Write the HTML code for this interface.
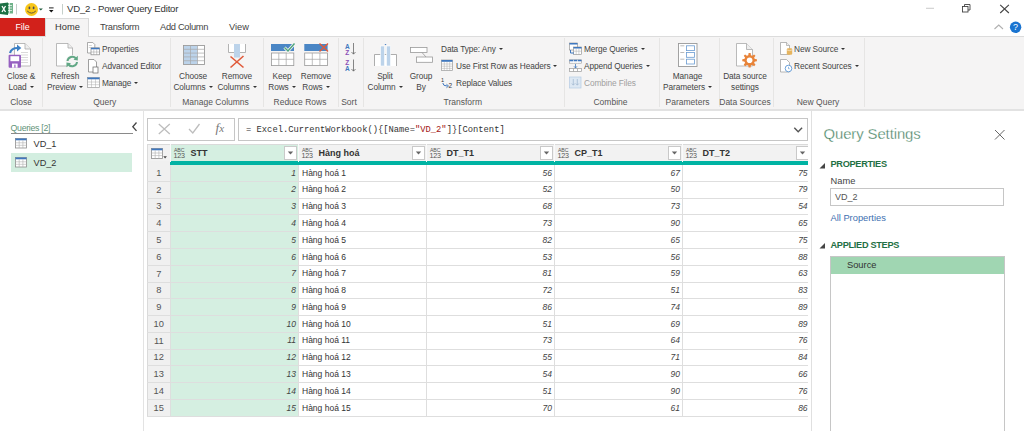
<!DOCTYPE html>
<html><head><meta charset="utf-8">
<style>
*{box-sizing:border-box;margin:0;padding:0}
html,body{width:1024px;height:431px;overflow:hidden;background:#fff;font-family:"Liberation Sans",sans-serif;color:#444}
.a{position:absolute;white-space:nowrap}
.t{position:absolute;white-space:nowrap;font-size:8.3px;line-height:10px;color:#444;letter-spacing:-0.1px}
.c{text-align:center}
.sep{position:absolute;top:38px;width:1px;height:69px;background:#e6e5e4}
.gl{position:absolute;top:97px;font-size:8.5px;line-height:10px;color:#555;white-space:nowrap;text-align:center}
.dd{display:inline-block;width:0;height:0;border-left:2.2px solid transparent;border-right:2.2px solid transparent;border-top:2.6px solid #333;vertical-align:middle;margin-left:3px;position:relative;top:-1px}
svg{position:absolute;overflow:visible}
</style></head><body>

<!-- TITLE BAR -->
<div class="a" style="left:0;top:0;width:1024px;height:18px;background:#fff"></div>
<svg style="left:0;top:0" width="64" height="18">
  <rect x="6" y="3" width="7" height="10.5" fill="#6fb28a"/>
  <path d="M7 5.5h5M7 8h5M7 10.5h5M9.5 3v10.5" stroke="#fff" stroke-width="0.7"/>
  <path d="M0 3.5 L8 2.5 L8 15 L0 14 Z" fill="#1d7044"/>
  <path d="M2 6 L5.5 12 M5.5 6 L2 12" stroke="#fff" stroke-width="1.3"/>
  <rect x="16" y="4" width="1" height="10.5" fill="#c5cfca"/>
  <circle cx="31.5" cy="9.5" r="6.5" fill="#f7c61a"/>
  <ellipse cx="29.4" cy="7.9" rx="0.9" ry="1.3" fill="#4a4a58"/>
  <ellipse cx="33.6" cy="7.9" rx="0.9" ry="1.3" fill="#4a4a58"/>
  <path d="M27.2 11 Q31.5 15.2 35.8 11" stroke="#5e5640" stroke-width="1" fill="none"/>
  <path d="M38.8 8.4 L42.8 8.4 L40.8 10.6 Z" fill="#1e5a3c"/>
  <rect x="49" y="7.4" width="4.6" height="1" fill="#222"/>
  <path d="M49 10 L53.5 10 L51.25 12.6 Z" fill="#111"/>
  <rect x="62" y="4" width="1" height="10.5" fill="#c5cfca"/>
</svg>
<div class="a" style="left:67px;top:3px;font-size:9.6px;line-height:12px;color:#333;letter-spacing:-0.2px">VD_2 - Power Query Editor</div>
<!-- window controls -->
<svg style="left:920px;top:0" width="104" height="40">
  <rect x="6" y="7.8" width="8" height="0.9" fill="#c4c4c4"/>
  <rect x="42.5" y="6.5" width="5.5" height="5.5" fill="none" stroke="#444" stroke-width="0.9"/>
  <path d="M44.5 6.5 V4.5 H50 V10 H48" fill="none" stroke="#444" stroke-width="0.9"/>
  <path d="M80.2 4.8 L88.9 13 M88.9 4.8 L80.2 13" stroke="#444" stroke-width="1.1"/>
  <path d="M74.5 29 L78.75 25 L83 29" fill="none" stroke="#b0b0b0" stroke-width="1.1"/>
  <circle cx="95.6" cy="27.2" r="5.7" fill="#1a74d0"/>
</svg>
<div class="a" style="left:1010.6px;top:21.3px;width:10px;font-size:9px;line-height:12px;font-weight:normal;color:#fff;text-align:center">?</div>

<!-- TABS -->
<div class="a" style="left:0;top:18px;width:45px;height:19px;background:#d2211b"></div>
<div class="a" style="left:0;top:21.8px;width:45px;text-align:center;font-size:8.8px;line-height:11px;color:#fff">File</div>
<div class="a" style="left:0;top:36px;width:1024px;height:1px;background:#dcdcdc"></div>
<div class="a" style="left:45px;top:18px;width:44px;height:19px;background:#f5f4f4;border:1px solid #dadada;border-bottom:none"></div>
<div class="a" style="left:55px;top:22px;font-size:9.3px;line-height:11px;color:#333">Home</div>
<div class="a" style="left:100px;top:22px;font-size:9.3px;line-height:11px;color:#444;letter-spacing:-0.3px">Transform</div>
<div class="a" style="left:160px;top:22px;font-size:9.3px;line-height:11px;color:#444;letter-spacing:-0.3px">Add Column</div>
<div class="a" style="left:229px;top:22px;font-size:9.3px;line-height:11px;color:#444">View</div>

<!-- RIBBON -->
<div class="a" style="left:0;top:37px;width:1024px;height:72px;background:#f5f4f4"></div>
<div class="a" style="left:0;top:109px;width:1024px;height:1.5px;background:#e2e2e2"></div>
<div class="sep" style="left:42px"></div>
<div class="sep" style="left:170px"></div>
<div class="sep" style="left:263px"></div>
<div class="sep" style="left:338px"></div>
<div class="sep" style="left:363px"></div>
<div class="sep" style="left:564px"></div>
<div class="sep" style="left:659px"></div>
<div class="sep" style="left:719px"></div>
<div class="sep" style="left:773px"></div>
<div class="sep" style="left:864px"></div>

<!-- Close & Load -->
<svg style="left:0;top:0" width="1024" height="110">
  <!-- close&load doc -->
  <path d="M14.5 43.5 H25 L30.5 49 V66 H14.5 Z" fill="#fff" stroke="#a9a9a9" stroke-width="0.8"/>
  <path d="M25 43.5 V49 H30.5" fill="#eee" stroke="#a9a9a9" stroke-width="0.8"/>
  <path d="M21 52.5h7M21 55h7M21 57.5h7M21 60h7M21 62.5h7" stroke="#c8c8c8" stroke-width="0.7"/>
  <path d="M10 53 Q11.5 47.8 18 48" fill="none" stroke="#3b7fc4" stroke-width="2.2"/>
  <path d="M17 44.6 L21.3 48 L17 51.4 Z" fill="#3b7fc4"/>
  <rect x="8.6" y="54.7" width="12.4" height="13" rx="1" fill="#9660c0"/>
  <rect x="10.4" y="56.2" width="8.8" height="5" fill="#fff"/>
  <rect x="12" y="63.6" width="5.6" height="4.1" fill="#fff"/>
  <rect x="14.3" y="64.6" width="1.2" height="3.1" fill="#9660c0"/>
  <!-- refresh doc -->
  <path d="M56.5 43.5 H68 L72.5 48 V66 H56.5 Z" fill="#fff" stroke="#a9a9a9" stroke-width="0.8"/>
  <path d="M68 43.5 V48 H72.5" fill="#eee" stroke="#a9a9a9" stroke-width="0.8"/>
  <circle cx="72.2" cy="61.6" r="6.6" fill="#f5f4f4"/>
  <path d="M67.5 61 A4.8 4.8 0 0 1 76 58.5" fill="none" stroke="#62a886" stroke-width="2"/>
  <path d="M77.8 55.8 L77.8 60.5 L73.5 59.8 Z" fill="#62a886"/>
  <path d="M77 62 A4.8 4.8 0 0 1 68.5 64.5" fill="none" stroke="#62a886" stroke-width="2"/>
  <path d="M66.5 67.2 L66.5 62.5 L71 63.2 Z" fill="#62a886"/>
  <!-- properties icon -->
  <path d="M87.5 42.5 H92.8 L94.8 44.5 V53 H87.5 Z" fill="#fff" stroke="#888" stroke-width="0.7"/>
  <path d="M88.8 45.5h3M88.8 47.5h2" stroke="#aaa" stroke-width="0.5"/>
  <rect x="91" y="47.8" width="8.5" height="7" fill="#fff" stroke="#888" stroke-width="0.7"/>
  <rect x="91" y="47.8" width="8.5" height="1.5" fill="#3f78bf"/>
  <path d="M93.8 49.3v5.5M96.7 49.3v5.5M91 52h8.5" stroke="#999" stroke-width="0.5"/>
  <!-- advanced editor icon -->
  <path d="M88.5 59.5 H94 L96.5 62 V72 H88.5 Z" fill="#fff" stroke="#777" stroke-width="0.7"/>
  <rect x="93" y="67" width="5" height="6" fill="#fff" stroke="#666" stroke-width="0.7"/>
  <!-- manage icon -->
  <rect x="87.5" y="77.5" width="12" height="10" fill="#fff" stroke="#999" stroke-width="0.7"/>
  <rect x="87.5" y="77.5" width="12" height="1.8" fill="#3f78bf"/>
  <path d="M91.5 79v8.5M95.5 79v8.5M87.5 82h12M87.5 84.7h12" stroke="#aaa" stroke-width="0.5"/>
  <!-- choose columns -->
  <rect x="183.5" y="45.5" width="21" height="19" fill="#fff" stroke="#9a9a9a" stroke-width="0.9"/>
  <rect x="184" y="46" width="13.5" height="18" fill="#bcd3ea"/>
  <path d="M190.5 45.5v19M197.5 45.5v19M183.5 49.3h21M183.5 53.1h21M183.5 56.9h21M183.5 60.7h21" stroke="#a8a8a8" stroke-width="0.7"/>
  <!-- remove columns -->
  <path d="M228.5 44 V52.5 H245.5 V44" fill="#fff" stroke="#aaa" stroke-width="0.9"/>
  <rect x="234" y="44" width="6" height="13.5" fill="#bcd3ea"/>
  <path d="M230.5 56.5 L243.5 67.5 M243.5 56 L230.5 67.5" stroke="#e05a3a" stroke-width="1.6"/>
  <!-- keep rows -->
  <rect x="271" y="44" width="23" height="7" fill="#4a86c5"/>
  <rect x="271.4" y="53" width="22.4" height="12.6" fill="#fff" stroke="#999" stroke-width="0.8"/>
  <path d="M278.8 53v12.6M286.2 53v12.6M271.4 59.3h22.4" stroke="#a3a3a3" stroke-width="0.7"/>
  <path d="M284.5 47.5 L288 51 L294.5 43.5" fill="none" stroke="#f5f4f4" stroke-width="3"/>
  <path d="M284.5 47.5 L288 51 L294.5 43.5" fill="none" stroke="#4ea57c" stroke-width="1.4"/>
  <!-- remove rows -->
  <rect x="304.3" y="44" width="23.3" height="7" fill="#4a86c5"/>
  <rect x="304.7" y="53" width="22.8" height="12.6" fill="#fff" stroke="#999" stroke-width="0.8"/>
  <path d="M312.3 53v12.6M319.9 53v12.6M304.7 59.3h22.8" stroke="#a3a3a3" stroke-width="0.7"/>
  <path d="M319.5 43.5 L328 51.5 M328 43.5 L319.5 51.5" stroke="#e05a3a" stroke-width="1.4"/>
  <!-- sort -->
  <text x="345" y="48.6" font-family="Liberation Sans" font-size="6.5" font-weight="bold" fill="#3f78bf">A</text>
  <text x="345.3" y="54.6" font-family="Liberation Sans" font-size="6.5" font-weight="bold" fill="#8a4fb7">Z</text>
  <path d="M353.5 43v11M351.5 52l2 2.2 2-2.2" fill="none" stroke="#555" stroke-width="0.7"/>
  <text x="345.3" y="65" font-family="Liberation Sans" font-size="6.5" font-weight="bold" fill="#8a4fb7">Z</text>
  <text x="345" y="71.3" font-family="Liberation Sans" font-size="6.5" font-weight="bold" fill="#3f78bf">A</text>
  <path d="M353.5 59.5v11.5M351.5 69l2 2.2 2-2.2" fill="none" stroke="#555" stroke-width="0.7"/>
  <!-- split column -->
  <path d="M374.5 66 V54.5 H396.5 V66" fill="#fff" stroke="#999" stroke-width="0.8"/>
  <rect x="380.5" y="46" width="4" height="20" fill="#bcd3ea" stroke="#fff" stroke-width="0.6"/>
  <rect x="386.5" y="46" width="4" height="20" fill="#bcd3ea" stroke="#fff" stroke-width="0.6"/>
  <path d="M384.5 44 L386.5 44 L385.5 45.3 Z" fill="#3f78bf"/>
  <!-- group by -->
  <rect x="410.5" y="47.5" width="16.5" height="5" fill="#fff" stroke="#999" stroke-width="0.8"/>
  <rect x="416.5" y="57" width="16" height="5.3" fill="#fff" stroke="#999" stroke-width="0.8"/>
  <path d="M422 52.5 L426 57" stroke="#999" stroke-width="0.8"/>
  <!-- use first row -->
  <rect x="441.5" y="60" width="11" height="10.5" fill="#fff" stroke="#999" stroke-width="0.7"/>
  <rect x="441.5" y="60" width="11" height="1.8" fill="#3f78bf"/>
  <path d="M444.3 61.8v8.7M447 61.8v8.7M449.7 61.8v8.7M441.5 64h11M441.5 66.2h11M441.5 68.4h11" stroke="#aaa" stroke-width="0.5"/>
  <!-- replace values -->
  <text x="441" y="82" font-family="Liberation Sans" font-size="5.5" fill="#333">1</text>
  <text x="448.5" y="88" font-family="Liberation Sans" font-size="6.5" fill="#333">2</text>
  <path d="M442.8 83 Q443 86 447 86" fill="none" stroke="#3f78bf" stroke-width="1"/>
  <path d="M446.5 84.3 L448.5 86 L446.5 87.7" fill="none" stroke="#3f78bf" stroke-width="1"/>
  <!-- merge -->
  <rect x="569.5" y="43" width="8" height="7" fill="#fff" stroke="#888" stroke-width="0.6"/>
  <rect x="569.5" y="43" width="8" height="1.5" fill="#3f78bf"/>
  <rect x="573.5" y="47" width="8" height="7.5" fill="#fff" stroke="#888" stroke-width="0.6"/>
  <rect x="573.5" y="47" width="8" height="1.5" fill="#3f78bf"/>
  <path d="M576.2 48.5v6M578.9 48.5v6M573.5 51.2h8" stroke="#aaa" stroke-width="0.5"/>
  <path d="M570.5 50 V53 H574" fill="none" stroke="#3f78bf" stroke-width="1"/>
  <!-- append -->
  <rect x="569.5" y="59.8" width="12" height="3.4" fill="#fff" stroke="#999" stroke-width="0.6"/>
  <rect x="569.5" y="59.8" width="12" height="1.5" fill="#3f78bf"/>
  <path d="M573.5 59.8v3.4M577.5 59.8v3.4" stroke="#fff" stroke-width="0.6"/>
  <path d="M575.5 64v4M574 66.3l1.5 1.7 1.5-1.7" fill="none" stroke="#3f78bf" stroke-width="0.8"/>
  <rect x="569.5" y="68.6" width="12" height="2.8" fill="#fff" stroke="#999" stroke-width="0.7"/>
  <path d="M573.5 68.6v2.8M577.5 68.6v2.8" stroke="#999" stroke-width="0.7"/>
  <!-- combine files -->
  <rect x="569.5" y="77" width="11.5" height="11" fill="#dde8f3" stroke="#b5cbe3" stroke-width="0.7"/>
  <path d="M573.3 79v6M571.8 83.5l1.5 1.7 1.5-1.7M577.3 79v6M575.8 83.5l1.5 1.7 1.5-1.7" fill="none" stroke="#9fb6cf" stroke-width="0.7"/>
  <!-- manage parameters -->
  <rect x="678.5" y="43.5" width="18.5" height="23" fill="#fff" stroke="#999" stroke-width="0.9"/>
  <rect x="686.5" y="45.8" width="8" height="4.8" fill="#fff" stroke="#6a9bd1" stroke-width="0.8"/>
  <rect x="686.5" y="52.5" width="8" height="4.8" fill="#fff" stroke="#6a9bd1" stroke-width="0.8"/>
  <rect x="686.5" y="59.2" width="8" height="4.8" fill="#fff" stroke="#6a9bd1" stroke-width="0.8"/>
  <path d="M680.3 45.8h4M680.3 52.5h4M680.3 59.2h4" stroke="#aaa" stroke-width="0.8"/>
  <!-- data source settings -->
  <path d="M736.5 43.5 H746.5 L752.5 49.5 V66 H736.5 Z" fill="#fff" stroke="#a9a9a9" stroke-width="0.8"/>
  <path d="M746.5 43.5 V49.5 H752.5" fill="#eee" stroke="#a9a9a9" stroke-width="0.8"/>
  <g transform="translate(749.6 60.3)" fill="#e8843a"><circle r="5.3"/><path d="M-1.5 -4 L-1 -7.3 H1 L1.5 -4 Z" transform="rotate(0)"/><path d="M-1.5 -4 L-1 -7.3 H1 L1.5 -4 Z" transform="rotate(45)"/><path d="M-1.5 -4 L-1 -7.3 H1 L1.5 -4 Z" transform="rotate(90)"/><path d="M-1.5 -4 L-1 -7.3 H1 L1.5 -4 Z" transform="rotate(135)"/><path d="M-1.5 -4 L-1 -7.3 H1 L1.5 -4 Z" transform="rotate(180)"/><path d="M-1.5 -4 L-1 -7.3 H1 L1.5 -4 Z" transform="rotate(225)"/><path d="M-1.5 -4 L-1 -7.3 H1 L1.5 -4 Z" transform="rotate(270)"/><path d="M-1.5 -4 L-1 -7.3 H1 L1.5 -4 Z" transform="rotate(315)"/><circle r="2.8" fill="#fff"/></g>
  <!-- new source -->
  <path d="M780.5 42.5 H786.5 L789.5 45.5 V54.5 H780.5 Z" fill="#fff" stroke="#999" stroke-width="0.7"/>
  <path d="M786.5 42.5 V45.5 H789.5" fill="#eee" stroke="#999" stroke-width="0.6"/><rect x="786.8" y="48.3" width="5.4" height="6.4" rx="1.2" fill="#e6b45e"/><path d="M787 50 Q789.5 51.2 792 50" fill="none" stroke="#fff" stroke-width="0.5"/>
  <!-- recent sources -->
  <path d="M780.5 59.5 H786.5 L789.5 62.5 V72 H780.5 Z" fill="#fff" stroke="#999" stroke-width="0.7"/>
  <circle cx="788.5" cy="68.5" r="3.3" fill="#fff" stroke="#4a8bd0" stroke-width="0.8"/>
  <path d="M788.5 66.8v1.9h1.2" fill="none" stroke="#4a8bd0" stroke-width="0.6"/>
</svg>

<div class="t c" style="left:0;top:71px;width:42px">Close &amp;</div>
<div class="t c" style="left:0;top:82px;width:42px">Load<span class="dd"></span></div>
<div class="gl" style="left:0;width:42px">Close</div>

<div class="t c" style="left:43px;top:71px;width:44px">Refresh</div>
<div class="t c" style="left:43px;top:82px;width:44px">Preview<span class="dd"></span></div>
<div class="t" style="left:102px;top:44px">Properties</div>
<div class="t" style="left:102px;top:61px">Advanced Editor</div>
<div class="t" style="left:102px;top:78px">Manage<span class="dd"></span></div>
<div class="gl" style="left:41.25px;width:127px">Query</div>

<div class="t c" style="left:171px;top:71px;width:44px">Choose</div>
<div class="t c" style="left:171px;top:82px;width:44px">Columns<span class="dd"></span></div>
<div class="t c" style="left:215px;top:71px;width:44px">Remove</div>
<div class="t c" style="left:215px;top:82px;width:44px">Columns<span class="dd"></span></div>
<div class="gl" style="left:169.5px;width:92px">Manage Columns</div>

<div class="t c" style="left:264px;top:71px;width:36px">Keep</div>
<div class="t c" style="left:264px;top:82px;width:36px">Rows<span class="dd"></span></div>
<div class="t c" style="left:298px;top:71px;width:36px">Remove</div>
<div class="t c" style="left:298px;top:82px;width:36px">Rows<span class="dd"></span></div>
<div class="gl" style="left:263px;width:74px">Reduce Rows</div>

<div class="gl" style="left:337px;width:24px">Sort</div>

<div class="t c" style="left:365px;top:71px;width:40px">Split</div>
<div class="t c" style="left:365px;top:82px;width:40px">Column<span class="dd"></span></div>
<div class="t c" style="left:404px;top:71px;width:34px">Group</div>
<div class="t c" style="left:404px;top:82px;width:34px">By</div>
<div class="t" style="left:441px;top:44px">Data Type: Any<span class="dd"></span></div>
<div class="t" style="left:456px;top:61px">Use First Row as Headers<span class="dd"></span></div>
<div class="t" style="left:456px;top:78px">Replace Values</div>
<div class="gl" style="left:362.8px;width:200px">Transform</div>

<div class="t" style="left:584px;top:44px">Merge Queries<span class="dd"></span></div>
<div class="t" style="left:584px;top:61px">Append Queries<span class="dd"></span></div>
<div class="t" style="left:584px;top:78px;color:#a0a0a0">Combine Files</div>
<div class="gl" style="left:563.5px;width:94px">Combine</div>

<div class="t c" style="left:658px;top:71px;width:59px">Manage</div>
<div class="t c" style="left:658px;top:82px;width:59px">Parameters<span class="dd"></span></div>
<div class="gl" style="left:658px;width:59px">Parameters</div>

<div class="t c" style="left:718.5px;top:71px;width:53px">Data source</div>
<div class="t c" style="left:718.5px;top:82px;width:53px">settings</div>
<div class="gl" style="left:718.5px;width:53px">Data Sources</div>

<div class="t" style="left:794px;top:44px">New Source<span class="dd"></span></div>
<div class="t" style="left:794px;top:61px">Recent Sources<span class="dd"></span></div>
<div class="gl" style="left:773px;width:90px">New Query</div>


<!-- LEFT PANE -->


<!-- FORMULA + TABLE -->
<div class="a" style="left:143px;top:110px;width:1px;height:321px;background:#e3e3e3"></div>
<div class="a" style="left:10.5px;top:122.5px;font-size:8.8px;line-height:11px;color:#5f9378;letter-spacing:-0.3px">Queries [2]</div>
<div class="a" style="left:10.5px;top:133px;width:122px;height:1px;background:#8a8a8a"></div>
<svg style="left:131px;top:121px" width="8" height="12"><path d="M5.5 1.5 L1.8 5.7 L5.5 9.9" fill="none" stroke="#444" stroke-width="1.3"/></svg>
<div class="a" style="left:10.5px;top:153px;width:121.5px;height:19px;background:#d3eee0"></div>
<svg style="left:15px;top:137.5px" width="12" height="11"><rect x="0.5" y="0.5" width="11" height="9.5" fill="#fff" stroke="#8c8c8c" stroke-width="0.8"/><rect x="0.5" y="0.5" width="11" height="1.8" fill="#3f78bf"/><path d="M4.2 2.3v7.7M7.9 2.3v7.7M0.5 4.8h11M0.5 7.3h11" stroke="#b0b0b0" stroke-width="0.6"/></svg>
<div class="a" style="left:33.5px;top:139.3px;font-size:9.2px;line-height:11px;color:#333">VD_1</div>
<svg style="left:15px;top:156.5px" width="12" height="11"><rect x="0.5" y="0.5" width="11" height="9.5" fill="#fff" stroke="#8c8c8c" stroke-width="0.8"/><rect x="0.5" y="0.5" width="11" height="1.8" fill="#3f78bf"/><path d="M4.2 2.3v7.7M7.9 2.3v7.7M0.5 4.8h11M0.5 7.3h11" stroke="#b0b0b0" stroke-width="0.6"/></svg>
<div class="a" style="left:33.5px;top:158.3px;font-size:9.2px;line-height:11px;color:#333">VD_2</div>
<div class="a" style="left:147px;top:118px;width:88px;height:23px;border:1px solid #c6c6c6;background:#fff"></div>
<svg style="left:147px;top:118px" width="88" height="23"><path d="M11.8 6 L22.8 16 M22.8 6 L11.8 16" stroke="#bdbdbd" stroke-width="1.3"/><path d="M42 11 L45.8 15 L52.5 6" fill="none" stroke="#bdbdbd" stroke-width="1.3"/></svg>
<div class="a" style="left:215.5px;top:121px;font-family:'Liberation Serif',serif;font-style:italic;font-size:13px;line-height:14px;color:#777">f<span style="font-size:11px">x</span></div>
<div class="a" style="left:238px;top:118px;width:570px;height:23px;border:1px solid #c6c6c6;background:#fff"></div>
<div class="a" style="left:246px;top:124.5px;font-family:'Liberation Mono',monospace;font-size:8.8px;line-height:11px;color:#333">= Excel.CurrentWorkbook(){[Name=<span style="color:#a31515">"VD_2"</span>]}[Content]</div>
<svg style="left:790px;top:124px" width="16" height="12"><path d="M4.3 3.8 L8.2 7.8 L12.1 3.8" fill="none" stroke="#555" stroke-width="1.4"/></svg>
<div class="a" style="left:147px;top:144px;width:661px;height:18px;background:#f2f2f2"></div>
<div class="a" style="left:170px;top:144px;width:128.5px;height:18px;background:#d5efe1"></div>
<div class="a" style="left:147px;top:161px;width:23px;height:255px;background:#f0f0f0"></div>
<div class="a" style="left:170px;top:165px;width:128.5px;height:251px;background:#d5efe1"></div>
<div class="a" style="left:170px;top:161.4px;width:638px;height:3.4px;background:#00b3a3"></div>
<div class="a" style="left:147px;top:144px;width:661px;height:1px;background:#dadada"></div>
<div class="a" style="left:147px;top:144px;width:1px;height:273px;background:#dadada"></div>
<div class="a" style="left:147px;top:181px;width:661px;height:1px;background:#dedede"></div>
<div class="a" style="left:147px;top:198px;width:661px;height:1px;background:#dedede"></div>
<div class="a" style="left:147px;top:214px;width:661px;height:1px;background:#dedede"></div>
<div class="a" style="left:147px;top:231px;width:661px;height:1px;background:#dedede"></div>
<div class="a" style="left:147px;top:248px;width:661px;height:1px;background:#dedede"></div>
<div class="a" style="left:147px;top:265px;width:661px;height:1px;background:#dedede"></div>
<div class="a" style="left:147px;top:282px;width:661px;height:1px;background:#dedede"></div>
<div class="a" style="left:147px;top:298px;width:661px;height:1px;background:#dedede"></div>
<div class="a" style="left:147px;top:315px;width:661px;height:1px;background:#dedede"></div>
<div class="a" style="left:147px;top:332px;width:661px;height:1px;background:#dedede"></div>
<div class="a" style="left:147px;top:349px;width:661px;height:1px;background:#dedede"></div>
<div class="a" style="left:147px;top:365px;width:661px;height:1px;background:#dedede"></div>
<div class="a" style="left:147px;top:382px;width:661px;height:1px;background:#dedede"></div>
<div class="a" style="left:147px;top:399px;width:661px;height:1px;background:#dedede"></div>
<div class="a" style="left:147px;top:416px;width:661px;height:1px;background:#dedede"></div>
<div class="a" style="left:170px;top:165px;width:1px;height:251px;background:#dedede"></div>
<div class="a" style="left:170px;top:144px;width:1px;height:18px;background:#fafafa"></div>
<div class="a" style="left:298px;top:165px;width:1px;height:251px;background:#dedede"></div>
<div class="a" style="left:298px;top:144px;width:1px;height:18px;background:#fafafa"></div>
<div class="a" style="left:426px;top:165px;width:1px;height:251px;background:#dedede"></div>
<div class="a" style="left:426px;top:144px;width:1px;height:18px;background:#fafafa"></div>
<div class="a" style="left:554px;top:165px;width:1px;height:251px;background:#dedede"></div>
<div class="a" style="left:554px;top:144px;width:1px;height:18px;background:#fafafa"></div>
<div class="a" style="left:682px;top:165px;width:1px;height:251px;background:#dedede"></div>
<div class="a" style="left:682px;top:144px;width:1px;height:18px;background:#fafafa"></div>
<svg style="left:151px;top:148px" width="18" height="12"><rect x="0.5" y="0.5" width="11" height="10" fill="#fff" stroke="#8c8c8c" stroke-width="0.8"/><rect x="0.5" y="0.5" width="11" height="1.8" fill="#3f78bf"/><path d="M4.2 2.3v8M7.9 2.3v8M0.5 5h11M0.5 7.6h11" stroke="#b0b0b0" stroke-width="0.6"/><path d="M12.3 8.2 L15.9 8.2 L14.1 10.4 Z" fill="#444"/></svg>
<div class="a" style="left:174px;top:147.5px;font-size:5.2px;line-height:5px;color:#555;letter-spacing:-0.1px">ABC</div>
<div class="a" style="left:173.5px;top:152.5px;font-size:7.2px;line-height:6px;color:#555;letter-spacing:-0.3px">123</div>
<div class="a" style="left:190.5px;top:148px;font-size:9px;line-height:10px;font-weight:bold;color:#333">STT</div>
<div class="a" style="left:284px;top:146px;width:13px;height:13.5px;background:#fff;border:1px solid #c9c9c9;"></div>
<svg style="left:284px;top:146px" width="13" height="13"><path d="M3.8 5.6 L9.2 5.6 L6.5 8.4 Z" fill="#666"/></svg>
<div class="a" style="left:302px;top:147.5px;font-size:5.2px;line-height:5px;color:#555;letter-spacing:-0.1px">ABC</div>
<div class="a" style="left:301.5px;top:152.5px;font-size:7.2px;line-height:6px;color:#555;letter-spacing:-0.3px">123</div>
<div class="a" style="left:318.5px;top:148px;font-size:9px;line-height:10px;font-weight:bold;color:#333">Hàng hoá</div>
<div class="a" style="left:412px;top:146px;width:13px;height:13.5px;background:#fff;border:1px solid #c9c9c9;"></div>
<svg style="left:412px;top:146px" width="13" height="13"><path d="M3.8 5.6 L9.2 5.6 L6.5 8.4 Z" fill="#666"/></svg>
<div class="a" style="left:430px;top:147.5px;font-size:5.2px;line-height:5px;color:#555;letter-spacing:-0.1px">ABC</div>
<div class="a" style="left:429.5px;top:152.5px;font-size:7.2px;line-height:6px;color:#555;letter-spacing:-0.3px">123</div>
<div class="a" style="left:446.5px;top:148px;font-size:9px;line-height:10px;font-weight:bold;color:#333">DT_T1</div>
<div class="a" style="left:540px;top:146px;width:13px;height:13.5px;background:#fff;border:1px solid #c9c9c9;"></div>
<svg style="left:540px;top:146px" width="13" height="13"><path d="M3.8 5.6 L9.2 5.6 L6.5 8.4 Z" fill="#666"/></svg>
<div class="a" style="left:558px;top:147.5px;font-size:5.2px;line-height:5px;color:#555;letter-spacing:-0.1px">ABC</div>
<div class="a" style="left:557.5px;top:152.5px;font-size:7.2px;line-height:6px;color:#555;letter-spacing:-0.3px">123</div>
<div class="a" style="left:574.5px;top:148px;font-size:9px;line-height:10px;font-weight:bold;color:#333">CP_T1</div>
<div class="a" style="left:668px;top:146px;width:13px;height:13.5px;background:#fff;border:1px solid #c9c9c9;"></div>
<svg style="left:668px;top:146px" width="13" height="13"><path d="M3.8 5.6 L9.2 5.6 L6.5 8.4 Z" fill="#666"/></svg>
<div class="a" style="left:686px;top:147.5px;font-size:5.2px;line-height:5px;color:#555;letter-spacing:-0.1px">ABC</div>
<div class="a" style="left:685.5px;top:152.5px;font-size:7.2px;line-height:6px;color:#555;letter-spacing:-0.3px">123</div>
<div class="a" style="left:702.5px;top:148px;font-size:9px;line-height:10px;font-weight:bold;color:#333">DT_T2</div>
<div class="a" style="left:796px;top:146px;width:12px;height:13.5px;background:#fff;border:1px solid #c9c9c9;border-right:none"></div>
<svg style="left:796px;top:146px" width="13" height="13"><path d="M3.8 5.6 L9.2 5.6 L6.5 8.4 Z" fill="#666"/></svg>
<div class="a" style="left:147px;top:167.60px;width:23.5px;text-align:center;font-size:9.3px;line-height:11px;color:#555;margin-top:0.3px">1</div>
<div class="a" style="left:170px;top:167.60px;width:126px;text-align:right;font-size:8.5px;line-height:11px;font-style:italic;color:#444">1</div>
<div class="a" style="left:302px;top:167.60px;font-size:8.5px;line-height:11px;color:#333">Hàng hoá 1</div>
<div class="a" style="left:426px;top:167.60px;width:126px;text-align:right;font-size:8.5px;line-height:11px;font-style:italic;color:#444">56</div>
<div class="a" style="left:554px;top:167.60px;width:126px;text-align:right;font-size:8.5px;line-height:11px;font-style:italic;color:#444">67</div>
<div class="a" style="left:682px;top:167.60px;width:125.60000000000002px;text-align:right;font-size:8.5px;line-height:11px;font-style:italic;color:#444">75</div>
<div class="a" style="left:147px;top:184.38px;width:23.5px;text-align:center;font-size:9.3px;line-height:11px;color:#555;margin-top:0.3px">2</div>
<div class="a" style="left:170px;top:184.38px;width:126px;text-align:right;font-size:8.5px;line-height:11px;font-style:italic;color:#444">2</div>
<div class="a" style="left:302px;top:184.38px;font-size:8.5px;line-height:11px;color:#333">Hàng hoá 2</div>
<div class="a" style="left:426px;top:184.38px;width:126px;text-align:right;font-size:8.5px;line-height:11px;font-style:italic;color:#444">52</div>
<div class="a" style="left:554px;top:184.38px;width:126px;text-align:right;font-size:8.5px;line-height:11px;font-style:italic;color:#444">50</div>
<div class="a" style="left:682px;top:184.38px;width:125.60000000000002px;text-align:right;font-size:8.5px;line-height:11px;font-style:italic;color:#444">79</div>
<div class="a" style="left:147px;top:201.16px;width:23.5px;text-align:center;font-size:9.3px;line-height:11px;color:#555;margin-top:0.3px">3</div>
<div class="a" style="left:170px;top:201.16px;width:126px;text-align:right;font-size:8.5px;line-height:11px;font-style:italic;color:#444">3</div>
<div class="a" style="left:302px;top:201.16px;font-size:8.5px;line-height:11px;color:#333">Hàng hoá 3</div>
<div class="a" style="left:426px;top:201.16px;width:126px;text-align:right;font-size:8.5px;line-height:11px;font-style:italic;color:#444">68</div>
<div class="a" style="left:554px;top:201.16px;width:126px;text-align:right;font-size:8.5px;line-height:11px;font-style:italic;color:#444">73</div>
<div class="a" style="left:682px;top:201.16px;width:125.60000000000002px;text-align:right;font-size:8.5px;line-height:11px;font-style:italic;color:#444">54</div>
<div class="a" style="left:147px;top:217.94px;width:23.5px;text-align:center;font-size:9.3px;line-height:11px;color:#555;margin-top:0.3px">4</div>
<div class="a" style="left:170px;top:217.94px;width:126px;text-align:right;font-size:8.5px;line-height:11px;font-style:italic;color:#444">4</div>
<div class="a" style="left:302px;top:217.94px;font-size:8.5px;line-height:11px;color:#333">Hàng hoá 4</div>
<div class="a" style="left:426px;top:217.94px;width:126px;text-align:right;font-size:8.5px;line-height:11px;font-style:italic;color:#444">73</div>
<div class="a" style="left:554px;top:217.94px;width:126px;text-align:right;font-size:8.5px;line-height:11px;font-style:italic;color:#444">90</div>
<div class="a" style="left:682px;top:217.94px;width:125.60000000000002px;text-align:right;font-size:8.5px;line-height:11px;font-style:italic;color:#444">65</div>
<div class="a" style="left:147px;top:234.72px;width:23.5px;text-align:center;font-size:9.3px;line-height:11px;color:#555;margin-top:0.3px">5</div>
<div class="a" style="left:170px;top:234.72px;width:126px;text-align:right;font-size:8.5px;line-height:11px;font-style:italic;color:#444">5</div>
<div class="a" style="left:302px;top:234.72px;font-size:8.5px;line-height:11px;color:#333">Hàng hoá 5</div>
<div class="a" style="left:426px;top:234.72px;width:126px;text-align:right;font-size:8.5px;line-height:11px;font-style:italic;color:#444">82</div>
<div class="a" style="left:554px;top:234.72px;width:126px;text-align:right;font-size:8.5px;line-height:11px;font-style:italic;color:#444">65</div>
<div class="a" style="left:682px;top:234.72px;width:125.60000000000002px;text-align:right;font-size:8.5px;line-height:11px;font-style:italic;color:#444">75</div>
<div class="a" style="left:147px;top:251.50px;width:23.5px;text-align:center;font-size:9.3px;line-height:11px;color:#555;margin-top:0.3px">6</div>
<div class="a" style="left:170px;top:251.50px;width:126px;text-align:right;font-size:8.5px;line-height:11px;font-style:italic;color:#444">6</div>
<div class="a" style="left:302px;top:251.50px;font-size:8.5px;line-height:11px;color:#333">Hàng hoá 6</div>
<div class="a" style="left:426px;top:251.50px;width:126px;text-align:right;font-size:8.5px;line-height:11px;font-style:italic;color:#444">53</div>
<div class="a" style="left:554px;top:251.50px;width:126px;text-align:right;font-size:8.5px;line-height:11px;font-style:italic;color:#444">56</div>
<div class="a" style="left:682px;top:251.50px;width:125.60000000000002px;text-align:right;font-size:8.5px;line-height:11px;font-style:italic;color:#444">88</div>
<div class="a" style="left:147px;top:268.28px;width:23.5px;text-align:center;font-size:9.3px;line-height:11px;color:#555;margin-top:0.3px">7</div>
<div class="a" style="left:170px;top:268.28px;width:126px;text-align:right;font-size:8.5px;line-height:11px;font-style:italic;color:#444">7</div>
<div class="a" style="left:302px;top:268.28px;font-size:8.5px;line-height:11px;color:#333">Hàng hoá 7</div>
<div class="a" style="left:426px;top:268.28px;width:126px;text-align:right;font-size:8.5px;line-height:11px;font-style:italic;color:#444">81</div>
<div class="a" style="left:554px;top:268.28px;width:126px;text-align:right;font-size:8.5px;line-height:11px;font-style:italic;color:#444">59</div>
<div class="a" style="left:682px;top:268.28px;width:125.60000000000002px;text-align:right;font-size:8.5px;line-height:11px;font-style:italic;color:#444">63</div>
<div class="a" style="left:147px;top:285.06px;width:23.5px;text-align:center;font-size:9.3px;line-height:11px;color:#555;margin-top:0.3px">8</div>
<div class="a" style="left:170px;top:285.06px;width:126px;text-align:right;font-size:8.5px;line-height:11px;font-style:italic;color:#444">8</div>
<div class="a" style="left:302px;top:285.06px;font-size:8.5px;line-height:11px;color:#333">Hàng hoá 8</div>
<div class="a" style="left:426px;top:285.06px;width:126px;text-align:right;font-size:8.5px;line-height:11px;font-style:italic;color:#444">72</div>
<div class="a" style="left:554px;top:285.06px;width:126px;text-align:right;font-size:8.5px;line-height:11px;font-style:italic;color:#444">51</div>
<div class="a" style="left:682px;top:285.06px;width:125.60000000000002px;text-align:right;font-size:8.5px;line-height:11px;font-style:italic;color:#444">83</div>
<div class="a" style="left:147px;top:301.84px;width:23.5px;text-align:center;font-size:9.3px;line-height:11px;color:#555;margin-top:0.3px">9</div>
<div class="a" style="left:170px;top:301.84px;width:126px;text-align:right;font-size:8.5px;line-height:11px;font-style:italic;color:#444">9</div>
<div class="a" style="left:302px;top:301.84px;font-size:8.5px;line-height:11px;color:#333">Hàng hoá 9</div>
<div class="a" style="left:426px;top:301.84px;width:126px;text-align:right;font-size:8.5px;line-height:11px;font-style:italic;color:#444">86</div>
<div class="a" style="left:554px;top:301.84px;width:126px;text-align:right;font-size:8.5px;line-height:11px;font-style:italic;color:#444">74</div>
<div class="a" style="left:682px;top:301.84px;width:125.60000000000002px;text-align:right;font-size:8.5px;line-height:11px;font-style:italic;color:#444">89</div>
<div class="a" style="left:147px;top:318.62px;width:23.5px;text-align:center;font-size:9.3px;line-height:11px;color:#555;margin-top:0.3px">10</div>
<div class="a" style="left:170px;top:318.62px;width:126px;text-align:right;font-size:8.5px;line-height:11px;font-style:italic;color:#444">10</div>
<div class="a" style="left:302px;top:318.62px;font-size:8.5px;line-height:11px;color:#333">Hàng hoá 10</div>
<div class="a" style="left:426px;top:318.62px;width:126px;text-align:right;font-size:8.5px;line-height:11px;font-style:italic;color:#444">51</div>
<div class="a" style="left:554px;top:318.62px;width:126px;text-align:right;font-size:8.5px;line-height:11px;font-style:italic;color:#444">69</div>
<div class="a" style="left:682px;top:318.62px;width:125.60000000000002px;text-align:right;font-size:8.5px;line-height:11px;font-style:italic;color:#444">89</div>
<div class="a" style="left:147px;top:335.40px;width:23.5px;text-align:center;font-size:9.3px;line-height:11px;color:#555;margin-top:0.3px">11</div>
<div class="a" style="left:170px;top:335.40px;width:126px;text-align:right;font-size:8.5px;line-height:11px;font-style:italic;color:#444">11</div>
<div class="a" style="left:302px;top:335.40px;font-size:8.5px;line-height:11px;color:#333">Hàng hoá 11</div>
<div class="a" style="left:426px;top:335.40px;width:126px;text-align:right;font-size:8.5px;line-height:11px;font-style:italic;color:#444">73</div>
<div class="a" style="left:554px;top:335.40px;width:126px;text-align:right;font-size:8.5px;line-height:11px;font-style:italic;color:#444">64</div>
<div class="a" style="left:682px;top:335.40px;width:125.60000000000002px;text-align:right;font-size:8.5px;line-height:11px;font-style:italic;color:#444">76</div>
<div class="a" style="left:147px;top:352.18px;width:23.5px;text-align:center;font-size:9.3px;line-height:11px;color:#555;margin-top:0.3px">12</div>
<div class="a" style="left:170px;top:352.18px;width:126px;text-align:right;font-size:8.5px;line-height:11px;font-style:italic;color:#444">12</div>
<div class="a" style="left:302px;top:352.18px;font-size:8.5px;line-height:11px;color:#333">Hàng hoá 12</div>
<div class="a" style="left:426px;top:352.18px;width:126px;text-align:right;font-size:8.5px;line-height:11px;font-style:italic;color:#444">55</div>
<div class="a" style="left:554px;top:352.18px;width:126px;text-align:right;font-size:8.5px;line-height:11px;font-style:italic;color:#444">71</div>
<div class="a" style="left:682px;top:352.18px;width:125.60000000000002px;text-align:right;font-size:8.5px;line-height:11px;font-style:italic;color:#444">84</div>
<div class="a" style="left:147px;top:368.96px;width:23.5px;text-align:center;font-size:9.3px;line-height:11px;color:#555;margin-top:0.3px">13</div>
<div class="a" style="left:170px;top:368.96px;width:126px;text-align:right;font-size:8.5px;line-height:11px;font-style:italic;color:#444">13</div>
<div class="a" style="left:302px;top:368.96px;font-size:8.5px;line-height:11px;color:#333">Hàng hoá 13</div>
<div class="a" style="left:426px;top:368.96px;width:126px;text-align:right;font-size:8.5px;line-height:11px;font-style:italic;color:#444">54</div>
<div class="a" style="left:554px;top:368.96px;width:126px;text-align:right;font-size:8.5px;line-height:11px;font-style:italic;color:#444">90</div>
<div class="a" style="left:682px;top:368.96px;width:125.60000000000002px;text-align:right;font-size:8.5px;line-height:11px;font-style:italic;color:#444">66</div>
<div class="a" style="left:147px;top:385.74px;width:23.5px;text-align:center;font-size:9.3px;line-height:11px;color:#555;margin-top:0.3px">14</div>
<div class="a" style="left:170px;top:385.74px;width:126px;text-align:right;font-size:8.5px;line-height:11px;font-style:italic;color:#444">14</div>
<div class="a" style="left:302px;top:385.74px;font-size:8.5px;line-height:11px;color:#333">Hàng hoá 14</div>
<div class="a" style="left:426px;top:385.74px;width:126px;text-align:right;font-size:8.5px;line-height:11px;font-style:italic;color:#444">51</div>
<div class="a" style="left:554px;top:385.74px;width:126px;text-align:right;font-size:8.5px;line-height:11px;font-style:italic;color:#444">90</div>
<div class="a" style="left:682px;top:385.74px;width:125.60000000000002px;text-align:right;font-size:8.5px;line-height:11px;font-style:italic;color:#444">76</div>
<div class="a" style="left:147px;top:402.52px;width:23.5px;text-align:center;font-size:9.3px;line-height:11px;color:#555;margin-top:0.3px">15</div>
<div class="a" style="left:170px;top:402.52px;width:126px;text-align:right;font-size:8.5px;line-height:11px;font-style:italic;color:#444">15</div>
<div class="a" style="left:302px;top:402.52px;font-size:8.5px;line-height:11px;color:#333">Hàng hoá 15</div>
<div class="a" style="left:426px;top:402.52px;width:126px;text-align:right;font-size:8.5px;line-height:11px;font-style:italic;color:#444">70</div>
<div class="a" style="left:554px;top:402.52px;width:126px;text-align:right;font-size:8.5px;line-height:11px;font-style:italic;color:#444">61</div>
<div class="a" style="left:682px;top:402.52px;width:125.60000000000002px;text-align:right;font-size:8.5px;line-height:11px;font-style:italic;color:#444">86</div>
<div class="a" style="left:811px;top:110px;width:1px;height:321px;background:#e0e0e0"></div>

<!-- QUERY SETTINGS -->
<div class="a" style="left:823.5px;top:125.5px;font-size:14.9px;line-height:17px;color:#3d7d5c;letter-spacing:-0.1px;-webkit-text-stroke:0.3px #fff">Query Settings</div>
<svg style="left:993px;top:127.5px" width="14" height="14"><path d="M2 2 L11.5 11.5 M11.5 2 L2 11.5" stroke="#666" stroke-width="1"/></svg>
<svg style="left:819px;top:161.5px" width="8" height="8"><path d="M6 1 L6 6.5 L0.5 6.5 Z" fill="#444"/></svg>
<div class="a" style="left:830.5px;top:159px;font-size:9.2px;line-height:11px;font-weight:bold;color:#1f7044;letter-spacing:-0.3px">PROPERTIES</div>
<div class="a" style="left:830.5px;top:175.7px;font-size:9.3px;line-height:11px;color:#444">Name</div>
<div class="a" style="left:830px;top:188px;width:174px;height:18px;border:1px solid #c6c6c6;background:#fff"></div>
<div class="a" style="left:835px;top:192px;font-size:9px;line-height:11px;color:#555">VD_2</div>
<div class="a" style="left:830.5px;top:213px;font-size:9.3px;line-height:11px;color:#3d6fb0">All Properties</div>
<svg style="left:819px;top:242px" width="8" height="8"><path d="M6 1 L6 6.5 L0.5 6.5 Z" fill="#444"/></svg>
<div class="a" style="left:830.5px;top:240px;font-size:9.2px;line-height:11px;font-weight:bold;color:#1f7044;letter-spacing:-0.3px">APPLIED STEPS</div>
<div class="a" style="left:830px;top:256px;width:175px;height:180px;border:1px solid #c6c6c6;background:#fff"></div>
<div class="a" style="left:831px;top:257px;width:173px;height:16.5px;background:#a0d6b2"></div>
<div class="a" style="left:847px;top:260px;font-size:9.3px;line-height:11px;color:#333">Source</div>

</body></html>
